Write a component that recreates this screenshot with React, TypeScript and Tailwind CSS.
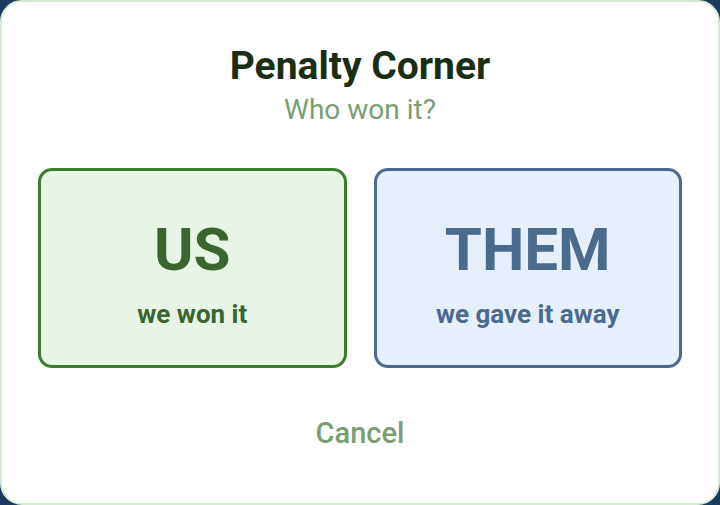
import React from 'react'

const font = { fontFamily: 'Roboto, "Noto Sans", sans-serif' }

export default function App() {
  return (
    <div className="w-[720px] h-[505px] bg-[#1b3a5c]" style={font}>
      <div className="w-full h-full bg-white border-2 border-[#d6ead3] rounded-[22px] flex flex-col items-center px-[36px]">
        <h1 className="mt-[40px] text-[39px] leading-[48px] font-bold text-[#1a2e14]">Penalty Corner</h1>
        <p className="mt-[4px] text-[28px] leading-[32px] text-[#7a9e72]">Who won it?</p>
        <div className="mt-[42px] w-full grid grid-cols-2 gap-[27px]">
          <button className="h-[200px] pt-[10px] rounded-[14px] border-[3px] border-[#3b7a2f] bg-[#e8f4e6] flex flex-col items-center justify-center">
            <span className="text-[60px] leading-[64px] font-bold text-[#3a6530]">US</span>
            <span className="mt-[17px] text-[26px] leading-[30px] font-bold text-[#3a6530]">we won it</span>
          </button>
          <button className="h-[200px] pt-[10px] rounded-[14px] border-[3px] border-[#4a6a8e] bg-[#e6effb] flex flex-col items-center justify-center">
            <span className="text-[60px] leading-[64px] font-bold text-[#4a6a8e]">THEM</span>
            <span className="mt-[17px] text-[26px] leading-[30px] font-bold text-[#4a6a8e]">we gave it away</span>
          </button>
        </div>
        <button className="mt-[48px] text-[29px] leading-[34px] font-medium text-[#7a9e72]">Cancel</button>
      </div>
    </div>
  )
}
